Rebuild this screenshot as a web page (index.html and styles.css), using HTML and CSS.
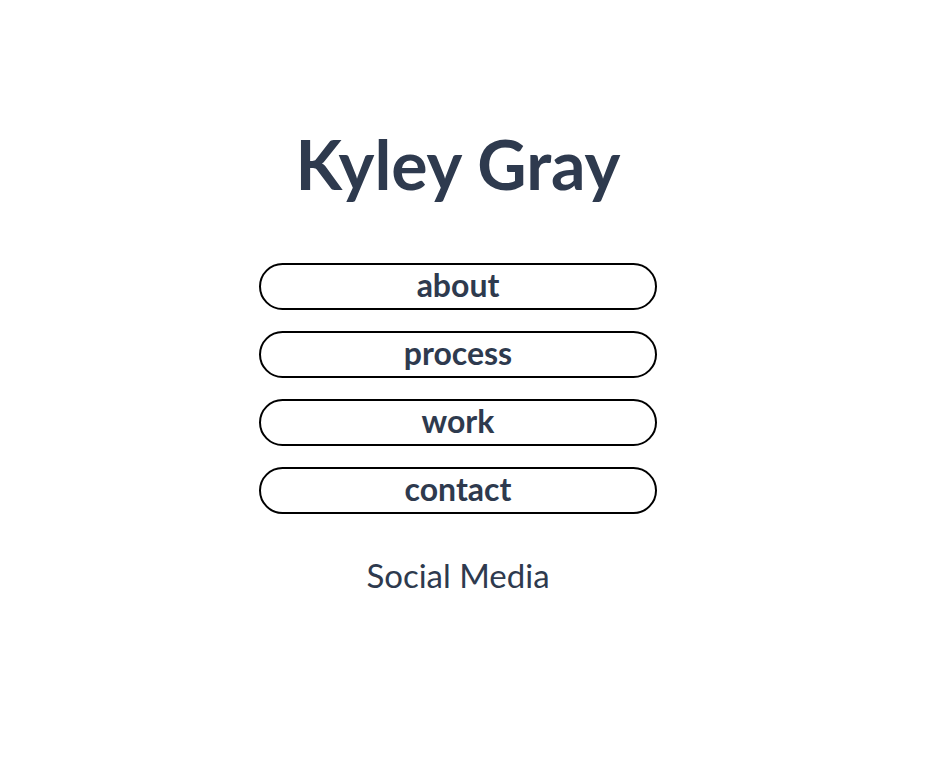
FILE: index.html
```html
<!DOCTYPE html>
<html lang="en">
<head>
<meta charset="utf-8">
<title>Kyley Gray</title>
<link rel="stylesheet" href="styles.css">
</head>
<body>
<main class="page">
  <h1 class="name">Kyley Gray</h1>
  <nav class="nav">
    <a class="nav-btn" href="#">about</a>
    <a class="nav-btn" href="#">process</a>
    <a class="nav-btn" href="#">work</a>
    <a class="nav-btn" href="#">contact</a>
  </nav>
  <p class="social">Social Media</p>
</main>
</body>
</html>
```
FILE: styles.css
```css
html, body {
  margin: 0;
  padding: 0;
  background: #ffffff;
}
body {
  font-family: Lato, "Noto Sans", sans-serif;
  color: #2e3a4e;
}
.page {
  display: flex;
  flex-direction: column;
  align-items: center;
  padding: 124px 10px 0 0;
}
.name {
  margin: 0;
  font-size: 68px;
  font-weight: 700;
  line-height: 80px;
  letter-spacing: 0;
}
.nav {
  display: flex;
  flex-direction: column;
  gap: 21px;
  margin-top: 59px;
}
.nav-btn {
  box-sizing: border-box;
  width: 398px;
  height: 47px;
  padding-bottom: 3px;
  border: 2px solid #000;
  border-radius: 24px;
  display: flex;
  align-items: center;
  justify-content: center;
  font-size: 32px;
  font-weight: 700;
  color: #2e3a4e;
  text-decoration: none;
  line-height: 1;
}
.social {
  margin: 41px 0 0;
  font-size: 33px;
  font-weight: 400;
  line-height: 40px;
}
```
